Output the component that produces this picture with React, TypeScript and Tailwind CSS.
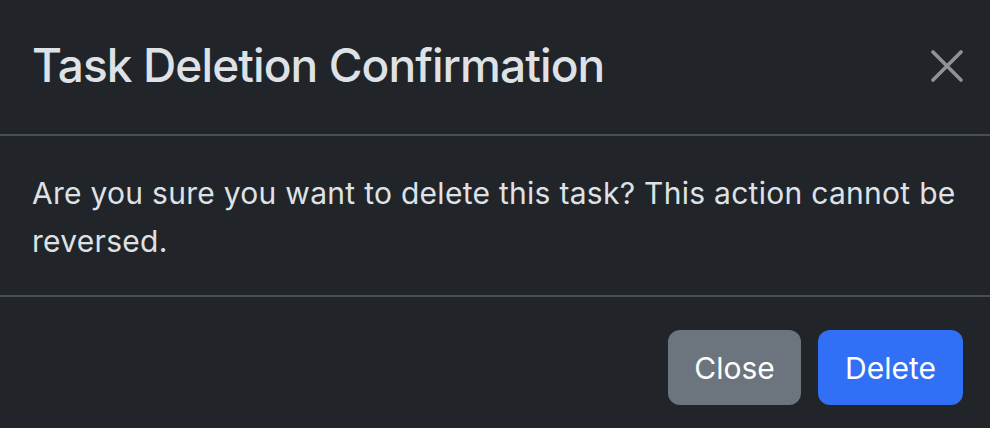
export default function App() {
  return (
    <div className="w-[990px] h-[428px] bg-[#212529] text-[#dee2e6] font-['Inter',sans-serif] flex flex-col overflow-hidden">
      <div className="h-[136px] flex items-start justify-between pl-[32px] pr-[27px] pt-[37px] border-b-2 border-[#4a4f56]">
        <h4 className="text-[46px] leading-[56px] font-medium tracking-[-0.9px]">Task Deletion Confirmation</h4>
        <button className="mt-[13px] w-[32px] h-[32px] text-[#909294]" aria-label="Close">
          <svg viewBox="0 0 32 32" className="w-[32px] h-[32px]" fill="none" stroke="currentColor" strokeWidth="3.6" strokeLinecap="round">
            <path d="M2 2 L30 30 M30 2 L2 30" />
          </svg>
        </button>
      </div>
      <div className="h-[161px] pl-[32px] pr-[30px] pt-[33px] border-b-2 border-[#4a4f56]">
        <p className="text-[30px] leading-[48px] tracking-[0.28px]">
          Are you sure you want to delete this task? This action cannot be reversed.
        </p>
      </div>
      <div className="flex-1 flex justify-end items-start gap-[17px] pt-[33px] pr-[27px]">
        <button className="h-[75px] w-[133px] pt-[2px] rounded-[12px] bg-[#6c757d] text-white text-[30px]">Close</button>
        <button className="h-[75px] w-[145px] pt-[2px] rounded-[12px] bg-[#3170f6] text-white text-[30px]">Delete</button>
      </div>
    </div>
  );
}
